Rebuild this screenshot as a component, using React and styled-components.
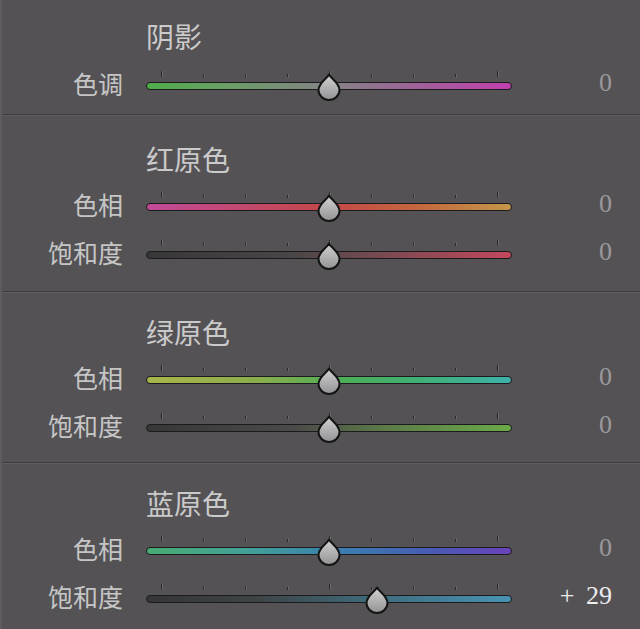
import React from 'react';
import styled, { createGlobalStyle } from 'styled-components';

const GlobalStyle = createGlobalStyle`
  html, body {
    margin: 0;
    padding: 0;
    background: #545255;
  }
`;

const sections = [
  {
    title: '阴影',
    pad: [16, 4],
    rows: [
      { label: '色调', value: 0, grad: 'linear-gradient(90deg, #4fae4a 0%, #6a9e66 22%, #858385 50%, #a0609a 75%, #c23fae 100%)' }
    ]
  },
  {
    title: '红原色',
    pad: [24, 12],
    rows: [
      { label: '色相', value: 0, grad: 'linear-gradient(90deg, #c24a9a 0%, #c24868 30%, #c44848 50%, #c4683e 75%, #c4964a 100%)' },
      { label: '饱和度', value: 0, grad: 'linear-gradient(90deg, #383738 0%, #4a4647 40%, #7a4a52 65%, #c4485c 100%)' }
    ]
  },
  {
    title: '绿原色',
    pad: [20, 10],
    rows: [
      { label: '色相', value: 0, grad: 'linear-gradient(90deg, #aab44a 0%, #8aae4c 30%, #4aae58 55%, #3fb07c 78%, #3eb2aa 100%)' },
      { label: '饱和度', value: 0, grad: 'linear-gradient(90deg, #383738 0%, #4a4a48 40%, #5c7a48 65%, #6aaa48 100%)' }
    ]
  },
  {
    title: '蓝原色',
    pad: [20, 10],
    rows: [
      { label: '色相', value: 0, grad: 'linear-gradient(90deg, #48ac72 0%, #42a098 28%, #3a7cb0 55%, #4a58b4 80%, #6c42bc 100%)' },
      { label: '饱和度', value: 29, grad: 'linear-gradient(90deg, #363537 0%, #3e4446 30%, #3e6878 60%, #4894b4 100%)' }
    ]
  }
];

const TICKS = [true, false, false, false, true, false, false, false, true];

export default function App() {
  return (
    <>
      <GlobalStyle />
      <Panel>
        {sections.map((s, i) => (
          <Section key={s.title} $top={s.pad[0]} $bottom={s.pad[1]} $first={i === 0}>
            <Title $first={i === 0}>{s.title}</Title>
            {s.rows.map(r => (
              <Row key={r.label}>
                <Label>{r.label}</Label>
                <SliderWrap>
                  <Ticks>
                    {TICKS.map((big, k) => <Tick key={k} $big={big} />)}
                  </Ticks>
                  <Track $grad={r.grad}>
                    <Thumb style={{ left: `${50 + r.value * 0.45}%` }}>
                      <svg width="26" height="28" viewBox="0 0 26 28">
                        <defs>
                          <linearGradient id={`tg${i}${r.label}`} x1="0" y1="0" x2="0" y2="1">
                            <stop offset="0" stopColor="#d2d2d3" />
                            <stop offset="1" stopColor="#939294" />
                          </linearGradient>
                        </defs>
                        <path
                          d="M13 1.5 C15 5.5 23.5 10 23.5 17 A10.5 10 0 0 1 2.5 17 C2.5 10 11 5.5 13 1.5 Z"
                          fill={`url(#tg${i}${r.label})`}
                          stroke="#141414"
                          strokeWidth="2"
                          strokeLinejoin="round"
                        />
                      </svg>
                    </Thumb>
                  </Track>
                </SliderWrap>
                <Value $active={r.value !== 0}>
                  {r.value === 0 ? '0' : `+ ${r.value}`}
                </Value>
              </Row>
            ))}
          </Section>
        ))}
      </Panel>
    </>
  );
}

const Panel = styled.div`
  width: 640px;
  height: 629px;
  overflow: hidden;
  background: #545255;
  border-left: 2px solid #5e5c5f;
  box-sizing: border-box;
  display: flex;
  flex-direction: column;
`;

const Section = styled.div`
  padding: ${p => p.$top}px 0 ${p => p.$bottom}px;
  border-top: ${p => (p.$first ? 'none' : '1px solid #3e3d40')};
  box-shadow: ${p => (p.$first ? 'none' : 'inset 0 1px 0 #5f5d60')};
  display: flex;
  flex-direction: column;
`;

const Title = styled.div`
  height: 40px;
  line-height: 40px;
  padding-left: 144px;
  margin-bottom: ${p => (p.$first ? 6 : 4)}px;
  font-family: "Noto Sans CJK SC", sans-serif;
  font-size: 28px;
  color: #cacaca;
`;

const Row = styled.div`
  height: 48px;
  display: flex;
  align-items: center;
`;

const Label = styled.div`
  width: 121px;
  padding-bottom: 5px;
  text-align: right;
  font-family: "Noto Sans CJK SC", sans-serif;
  font-size: 25px;
  color: #c6c6c6;
  line-height: 1;
`;

const SliderWrap = styled.div`
  margin-left: 23px;
  width: 366px;
  display: flex;
  flex-direction: column;
  padding-bottom: 11px;
`;

const Ticks = styled.div`
  height: 6px;
  margin-bottom: 5px;
  padding: 0 14px 0 15px;
  display: flex;
  justify-content: space-between;
  align-items: flex-end;
`;

const Tick = styled.span`
  width: 1px;
  height: ${p => (p.$big ? 6 : 3)}px;
  background: #2a292b;
  box-shadow: 1px 0 0 #6a686b;
`;

const Track = styled.div`
  position: relative;
  height: 6px;
  border: 1.5px solid #1b1a1c;
  border-radius: 5px;
  background: ${p => p.$grad};
`;

const Thumb = styled.div`
  position: absolute;
  top: -10px;
  width: 26px;
  height: 28px;
  transform: translateX(-50%);
  display: flex;
`;

const Value = styled.div`
  flex: 1;
  text-align: right;
  padding-right: 28px;
  padding-bottom: 6px;
  font-family: "Liberation Serif", serif;
  font-size: 26px;
  word-spacing: 5px;
  color: ${p => (p.$active ? '#ededed' : '#9a999b')};
`;
